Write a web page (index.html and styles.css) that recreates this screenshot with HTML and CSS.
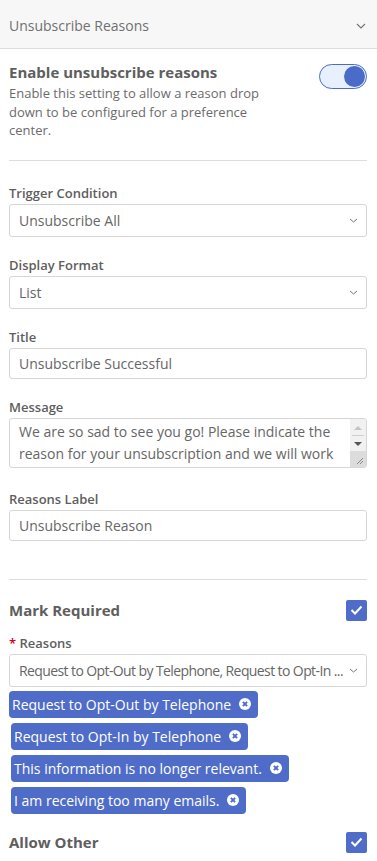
FILE: index.html
```html
<!DOCTYPE html>
<html lang="en">
<head>
    <meta charset="UTF-8">
    <meta name="viewport" content="width=device-width, initial-scale=1.0">
    <title>Unsubscribe Reasons</title>
    <link rel="stylesheet" href="styles.css">
</head>
<body>

    <div class="panel-header">
        <span>Unsubscribe Reasons</span>
        <svg class="chevron" width="10" height="6" viewBox="0 0 10 6"><path d="M1 1l4 4 4-4" fill="none" stroke="#777" stroke-width="1.2"/></svg>
    </div>

    <div class="panel-body">
        <!-- enable -->
        <div class="setting">
            <div class="setting-text">
                <div class="setting-title">Enable unsubscribe reasons</div>
                <div class="setting-desc">Enable this setting to allow a reason drop down to be configured for a preference center.</div>
            </div>
            <div class="toggle"><span class="knob"></span></div>
        </div>

        <hr class="divider first">

        <label class="field-label">Trigger Condition</label>
        <div class="select">
            <span class="select-value">Unsubscribe All</span>
            <svg width="9" height="5" viewBox="0 0 9 5"><path d="M1 1l3.5 3 3.5-3" fill="none" stroke="#777" stroke-width="1"/></svg>
        </div>

        <label class="field-label">Display Format</label>
        <div class="select">
            <span class="select-value">List</span>
            <svg width="9" height="5" viewBox="0 0 9 5"><path d="M1 1l3.5 3 3.5-3" fill="none" stroke="#777" stroke-width="1"/></svg>
        </div>

        <label class="field-label">Title</label>
        <input class="input" type="text" value="Unsubscribe Successful">

        <label class="field-label">Message</label>
        <div class="textarea-wrap">
            <textarea class="textarea" rows="2">We are so sad to see you go! Please indicate the reason for your unsubscription and we will work to improve your experience.</textarea>
            <div class="fake-scroll">
                <span class="arrow-up"></span>
                <span class="arrow-line"></span>
                <span class="arrow-down"></span>
                <span class="grip">
                    <svg width="8" height="8" viewBox="0 0 8 8"><path d="M7 1L1 7M7 4L4 7" stroke="#888" stroke-width="1"/></svg>
                </span>
            </div>
        </div>

        <label class="field-label">Reasons Label</label>
        <input class="input" type="text" value="Unsubscribe Reason">

        <hr class="divider second">

        <div class="check-row">
            <span class="check-label">Mark Required</span>
            <span class="checkbox"><svg width="13" height="10" viewBox="0 0 13 10"><path d="M1.5 5l3.5 3.5 6.5-7" fill="none" stroke="#fff" stroke-width="2"/></svg></span>
        </div>

        <label class="field-label reasons"><span class="req">*</span> Reasons</label>
        <div class="select">
            <span class="select-value tight">Request to Opt-Out by Telephone, Request to Opt-In ...</span>
            <svg width="9" height="5" viewBox="0 0 9 5"><path d="M1 1l3.5 3 3.5-3" fill="none" stroke="#777" stroke-width="1"/></svg>
        </div>

        <div class="chips">
            <span class="chip chip-first">Request to Opt-Out by Telephone <i class="chip-x"></i></span>
            <span class="chip">Request to Opt-In by Telephone <i class="chip-x"></i></span>
            <span class="chip">This information is no longer relevant. <i class="chip-x"></i></span>
            <span class="chip">I am receiving too many emails. <i class="chip-x"></i></span>
        </div>

        <div class="check-row other">
            <span class="check-label">Allow Other</span>
            <span class="checkbox"><svg width="13" height="10" viewBox="0 0 13 10"><path d="M1.5 5l3.5 3.5 6.5-7" fill="none" stroke="#fff" stroke-width="2"/></svg></span>
        </div>
    </div>

</body>
</html>
```

FILE: styles.css
```css
body {
    font-family: "Open Sans", "Liberation Sans", sans-serif;
    margin: 0;
    background-color: #fff;
    color: #666;
}
.panel-header {
    display: flex;
    align-items: center;
    justify-content: space-between;
    padding: 2px 11px 0 9px;
    box-sizing: border-box;
    height: 49px;
    background-color: #f7f7f7;
    border-bottom: 1px solid #dcdcdc;
    font-size: 14px;
    color: #707070;
}
.chevron {
    margin-top: 1px;
}
.panel-body {
    padding: 0 10px 0 9px;
}
.setting {
    display: flex;
    justify-content: space-between;
    align-items: flex-start;
    padding-top: 13px;
}
.setting-title {
    font-size: 15px;
    font-weight: 700;
    line-height: 21px;
    color: #5e5e5e;
}
.setting-desc {
    font-size: 13px;
    line-height: 18.5px;
    max-width: 255px;
    margin-top: 1px;
    color: #6b6b6b;
}
.toggle {
    width: 46px;
    height: 23px;
    border: 1px solid #4a6cc8;
    border-radius: 13px;
    background-color: #e8f0fe;
    margin-top: 2px;
    position: relative;
}
.knob {
    position: absolute;
    right: 1px;
    top: 1px;
    width: 21px;
    height: 21px;
    border-radius: 50%;
    background-color: #4a6cc8;
}
.divider {
    border: none;
    border-top: 1px solid #ddd;
    margin: 0;
}
.divider.first {
    margin-top: 20px;
    margin-bottom: 23px;
}
.divider.second {
    margin-top: 38px;
    margin-bottom: 20px;
}
.field-label {
    display: block;
    font-size: 13px;
    font-weight: 600;
    line-height: 18px;
    color: #5e5e5e;
    margin-bottom: 2px;
}
.select, .input, .textarea {
    box-sizing: border-box;
    width: 100%;
    border: 1px solid #d6d6d6;
    border-radius: 3px;
    background-color: #fff;
    font-family: "Open Sans", "Liberation Sans", sans-serif;
    font-size: 14px;
    color: #666;
    margin: 0 0 19px 0;
}
.select {
    height: 33px;
    display: flex;
    align-items: center;
    justify-content: space-between;
    padding: 0 8px 0 9px;
}
.select-value {
    min-width: 0;
    white-space: nowrap;
    overflow: hidden;
}
.select-value.tight {
    letter-spacing: -0.6px;
}
.select svg {
    flex-shrink: 0;
    margin-left: 2px;
}
.input {
    height: 31px;
    padding: 0 9px;
    display: block;
    outline: none;
}
.textarea-wrap {
    position: relative;
    margin-bottom: 22px;
}
.textarea {
    display: block;
    height: 50px;
    padding: 2px 24px 0 9px;
    line-height: 22px;
    resize: none;
    overflow: hidden;
    outline: none;
    margin: 0;
}
/* scrollbar drawn over the textarea's right edge */
.fake-scroll {
    position: absolute;
    top: 1px;
    right: 1px;
    bottom: 1px;
    width: 16px;
    background-color: #f1f1f1;
    display: flex;
    flex-direction: column;
    align-items: center;
    border-radius: 0 2px 2px 0;
}
.arrow-up {
    margin-top: 7px;
    border-left: 4px solid transparent;
    border-right: 4px solid transparent;
    border-bottom: 4px solid #c4c4c4;
}
.arrow-line {
    width: 12px;
    border-top: 1px solid #cfcfcf;
    margin-top: 5px;
}
.arrow-down {
    margin-top: 6px;
    border-left: 4px solid transparent;
    border-right: 4px solid transparent;
    border-top: 4px solid #555;
}
.grip {
    margin-top: auto;
    width: 16px;
    height: 16px;
    background-color: #dcdcdc;
    display: flex;
    align-items: flex-end;
    justify-content: flex-end;
    padding: 0 2px 2px 0;
    box-sizing: border-box;
}
.check-row {
    display: flex;
    justify-content: space-between;
    align-items: center;
}
.check-label {
    font-size: 15px;
    font-weight: 700;
    color: #5e5e5e;
}
.checkbox {
    width: 21px;
    height: 21px;
    border-radius: 2px;
    background-color: #4f6dc8;
    display: flex;
    align-items: center;
    justify-content: center;
}
.field-label.reasons {
    margin-top: 13px;
}
.req {
    color: #d0021b;
}
.chips {
    display: flex;
    flex-direction: column;
    align-items: flex-start;
    gap: 5px;
    margin-top: -15px;
}
.chip {
    display: inline-flex;
    align-items: center;
    height: 27px;
    padding: 0 7px 0 3px;
    margin-left: 2px;
    border-radius: 4px;
    background-color: #4f6dc8;
    color: #fff;
    font-size: 14px;
    white-space: pre;
}
.chip-first {
    margin-left: 0;
}
.chip-x {
    position: relative;
    width: 12px;
    height: 12px;
    border-radius: 50%;
    background-color: #fff;
    margin-left: 4px;
}
.chip-x::before, .chip-x::after {
    content: "";
    position: absolute;
    left: 5px;
    top: 3px;
    width: 2px;
    height: 6px;
    background-color: #4f6dc8;
    transform: rotate(45deg);
}
.chip-x::after {
    transform: rotate(-45deg);
}
.check-row.other {
    margin-top: 18px;
}
```
